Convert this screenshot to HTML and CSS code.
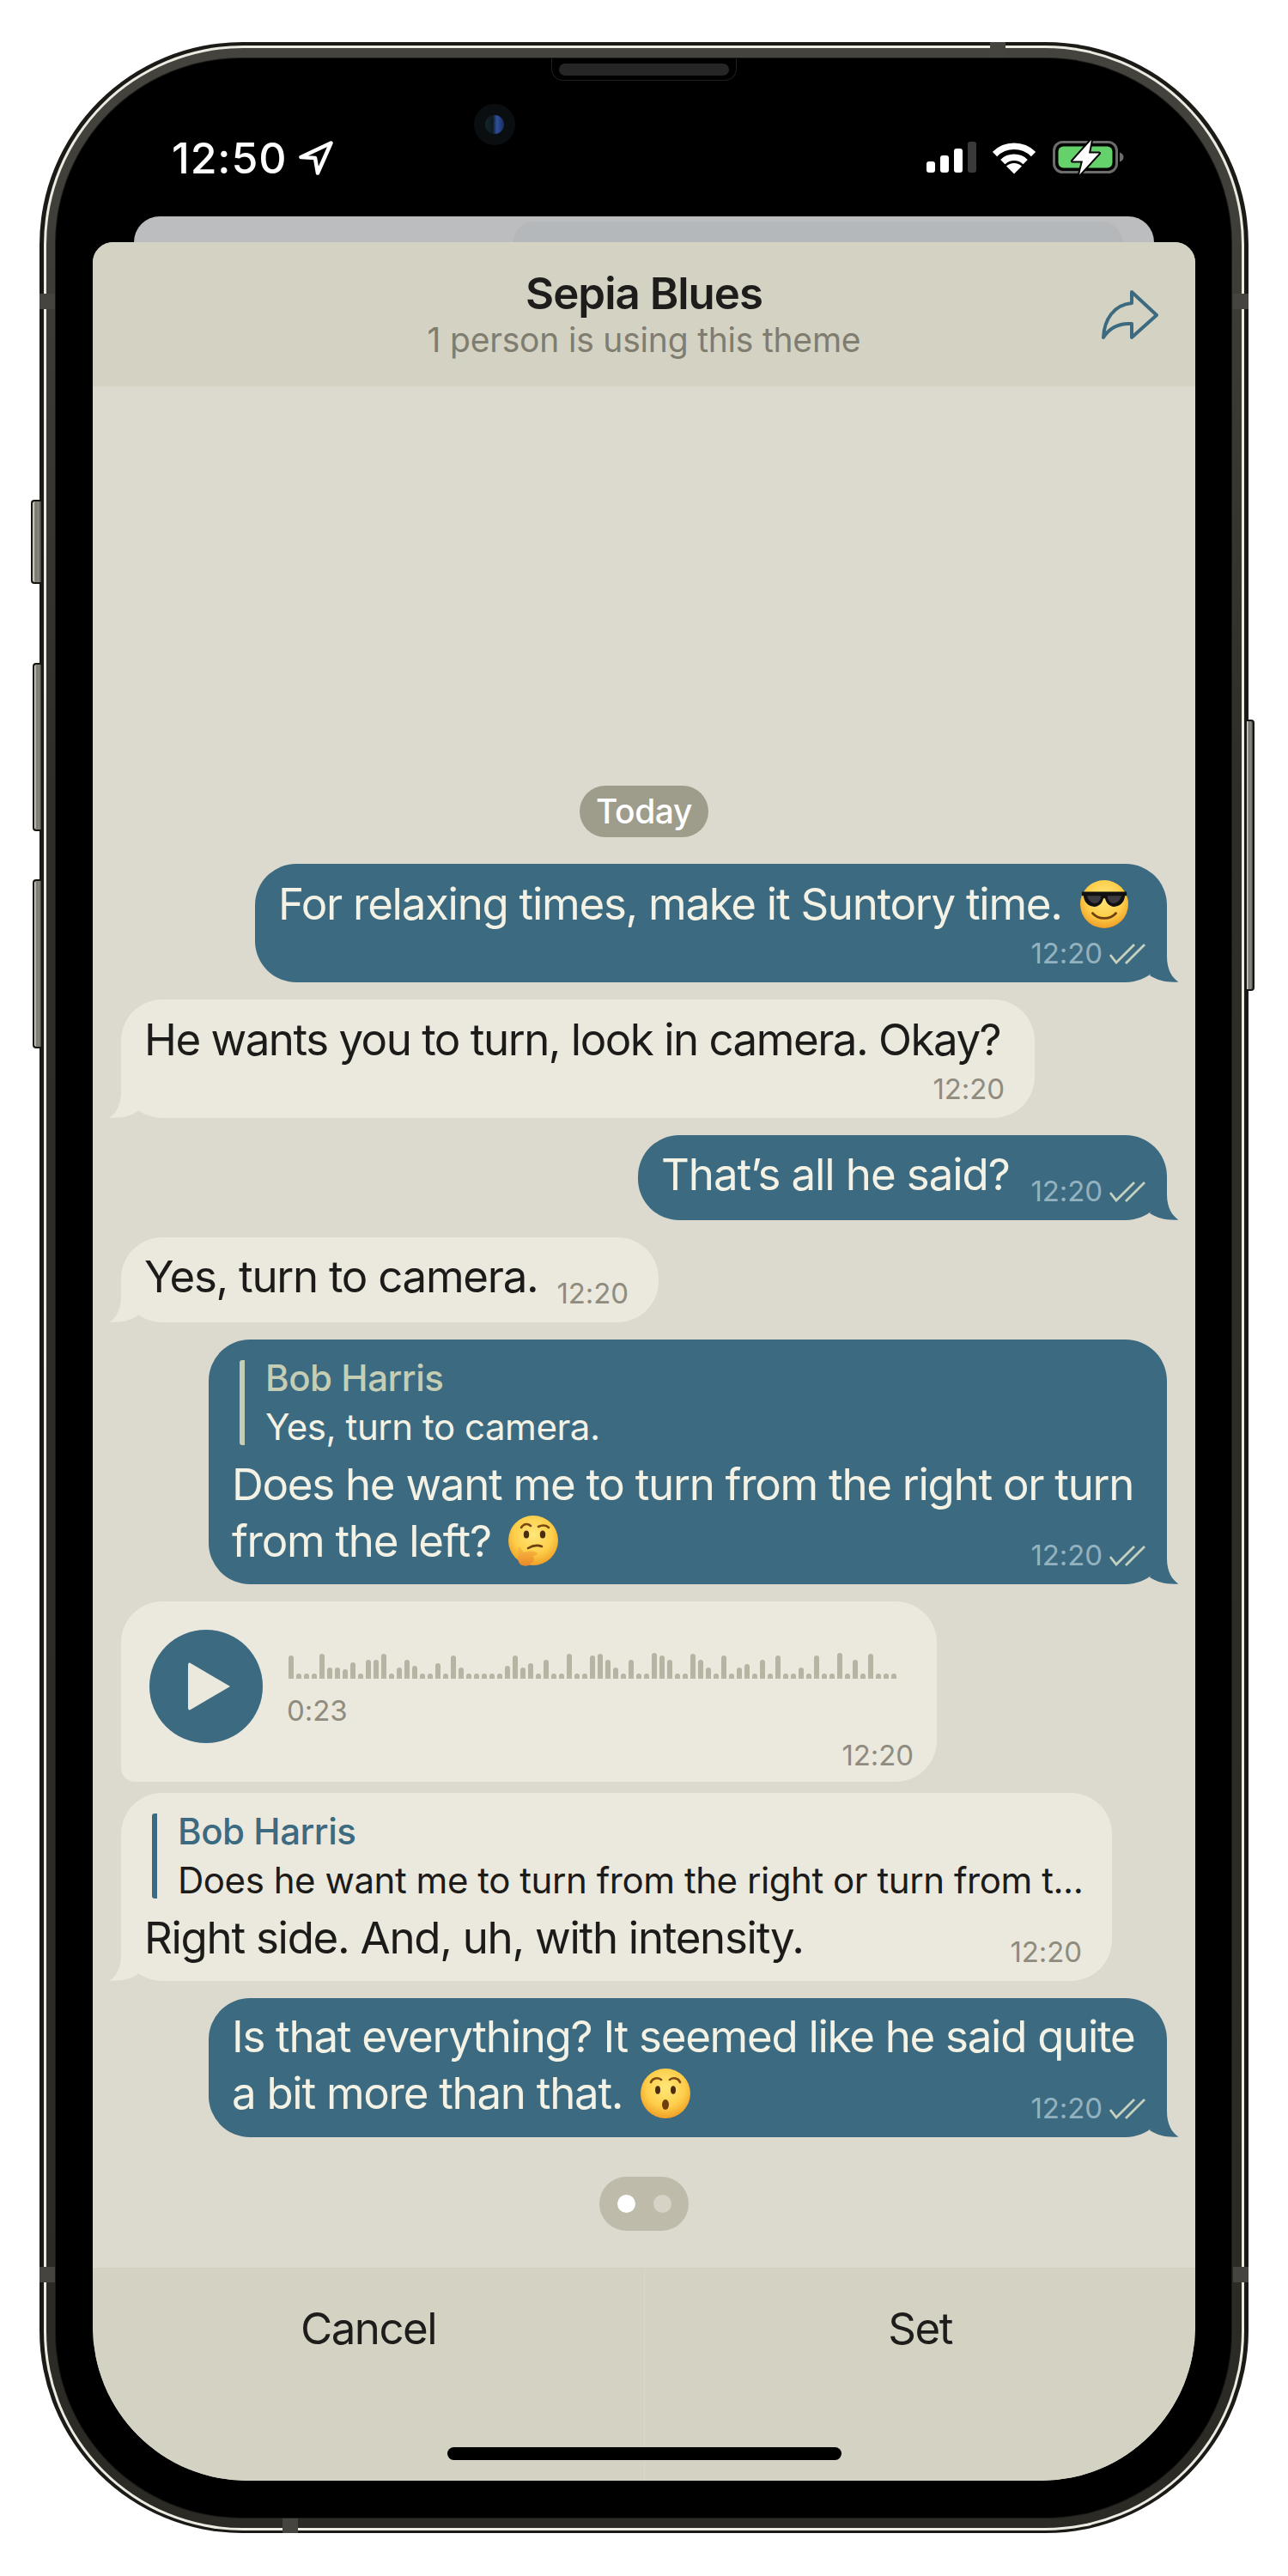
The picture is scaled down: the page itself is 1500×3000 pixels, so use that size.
FILE: index.html
```html
<!DOCTYPE html>
<html lang="en">
<head>
    <meta charset="UTF-8">
    <title>Sepia Blues</title>
    <link rel="stylesheet" href="styles.css">
</head>
<body>
    <svg class="defs" aria-hidden="true">
        <defs>
            <radialGradient id="face" cx="50%" cy="38%" r="65%">
                <stop offset="0" stop-color="#ffe77a"/>
                <stop offset="0.6" stop-color="#fdce4a"/>
                <stop offset="1" stop-color="#ee9a22"/>
            </radialGradient>
            <linearGradient id="hand" x1="0" y1="0" x2="0" y2="1">
                <stop offset="0" stop-color="#fbbf44"/>
                <stop offset="1" stop-color="#e8882a"/>
            </linearGradient>
        </defs>
        <symbol id="tail" viewBox="0 0 34 50">
            <path d="M20 0V20C20 35 26 45 33.5 49.5C21 50.5 9 48 0 42L10 20Z"/>
        </symbol>
        <symbol id="checks" viewBox="0 0 42 24">
            <path d="M1 13L8 22L29 1M19 23L41 1" fill="none" stroke-width="2.8"/>
        </symbol>
    </svg>

    <div class="phone">
        <span class="side-btn btn-mute"></span>
        <span class="side-btn btn-up"></span>
        <span class="side-btn btn-down"></span>
        <span class="side-btn btn-power"></span>
        <span class="antenna ant-top"></span>
        <span class="antenna ant-bottom"></span>
        <span class="antenna ant-left1"></span>
        <span class="antenna ant-left2"></span>
        <span class="antenna ant-right1"></span>
        <span class="antenna ant-right2"></span>

        <div class="rim">
            <div class="band">
                <div class="screen">
                    <div class="speaker"><span></span></div>
                    <div class="camera"><span></span></div>

                    <div class="status">
                        <div class="status-left">
                            <span class="clock">12:50</span>
                            <svg class="loc" viewBox="0 0 40 40"><path d="M37.5 2.5L2.5 19L19 20L22 37.5Z"/></svg>
                        </div>
                        <div class="status-right">
                            <div class="signal">
                                <span class="s1"></span><span class="s2"></span><span class="s3"></span><span class="s4"></span>
                            </div>
                            <svg class="wifi" viewBox="0 0 50 38">
                                <path d="M2.5 14.5A32 32 0 0 1 47.5 14.5M11.8 23.6A19 19 0 0 1 38.2 23.6" fill="none" stroke="#fff" stroke-width="7.5"/>
                                <path d="M25 37.5L16 28.5A13 13 0 0 1 34 28.5Z" fill="#fff"/>
                            </svg>
                            <svg class="battery" viewBox="0 0 84 42">
                                <rect x="1.5" y="3.5" width="73" height="35" rx="10" fill="none" stroke="#6c6c6c" stroke-width="3"/>
                                <rect x="6.5" y="8.5" width="63" height="25" rx="6" fill="#65d16a"/>
                                <path d="M78 15.5C81 16.5 82.5 18.5 82.5 21C82.5 23.5 81 25.5 78 26.5Z" fill="#6c6c6c"/>
                                <path d="M45 1L23 25.5H35L31 41.5L54 16.5H42Z" fill="#fff" stroke="#000" stroke-width="4" stroke-linejoin="round" paint-order="stroke"/>
                            </svg>
                        </div>
                    </div>

                    <div class="back-card"><div class="back-card-inner"></div></div>

                    <div class="sheet">
                        <header class="sheet-head">
                            <h1>Sepia Blues</h1>
                            <p>1 person is using this theme</p>
                            <svg class="share" viewBox="0 0 66 58">
                                <path d="M35 2L64 29L35 55V39C20 38 9 44 2 55C3 34 14 17 35 15Z"/>
                            </svg>
                        </header>

                        <div class="chat">
                            <div class="date-pill">Today</div>

                            <div class="bubble out msg-suntory">
                                <p class="text">For relaxing times, make it Suntory time.<svg class="emoji cool" viewBox="0 0 58 58">
                                    <circle cx="29" cy="29" r="29" fill="url(#face)"/>
                                    <path d="M2 14H56V19H54C53 28 47 32 41 32C35 32 31 27 30 22H28C27 27 23 32 17 32C11 32 5 28 4 19H2Z" fill="#111"/>
                                    <path d="M8 19C10 25 14 28 18 28C22 28 25 24 25 19Z" fill="#3b3b3f"/>
                                    <path d="M33 19C33 24 36 28 40 28C44 28 48 25 50 19Z" fill="#3b3b3f"/>
                                    <path d="M15 40C22 48 36 48 43 40" fill="none" stroke="#6d3f10" stroke-width="3" stroke-linecap="round"/>
                                </svg></p>
                                <span class="time">12:20<svg class="checks"><use href="#checks"/></svg></span>
                                <svg class="tail"><use href="#tail"/></svg>
                            </div>

                            <div class="bubble in msg-camera">
                                <p class="text">He wants you to turn, look in camera. Okay?</p>
                                <span class="time">12:20</span>
                                <svg class="tail"><use href="#tail"/></svg>
                            </div>

                            <div class="bubble out msg-said short">
                                <p class="text">That’s all he said?</p>
                                <span class="time">12:20<svg class="checks"><use href="#checks"/></svg></span>
                                <svg class="tail"><use href="#tail"/></svg>
                            </div>

                            <div class="bubble in msg-turn short">
                                <p class="text">Yes, turn to camera.</p>
                                <span class="time">12:20</span>
                                <svg class="tail"><use href="#tail"/></svg>
                            </div>

                            <div class="bubble out msg-right quoted">
                                <div class="quote">
                                    <div class="quote-name">Bob Harris</div>
                                    <div class="quote-text">Yes, turn to camera.</div>
                                </div>
                                <p class="text">Does he want me to turn from the right or turn<br>from the left?<svg class="emoji thinking" viewBox="0 0 58 60">
                                    <circle cx="29" cy="29" r="29" fill="url(#face)"/>
                                    <path d="M15 14C18 9 23 9 26 12M35 13C39 11 44 11 47 14" fill="none" stroke="#7a4a12" stroke-width="2.6" stroke-linecap="round"/>
                                    <ellipse cx="21" cy="22" rx="3.2" ry="4.6" fill="#4a2c0e"/>
                                    <ellipse cx="40" cy="22" rx="3.2" ry="4.6" fill="#4a2c0e"/>
                                    <path d="M23 38C28 35 34 34 39 36" fill="none" stroke="#6d3f10" stroke-width="2.6" stroke-linecap="round"/>
                                    <path d="M11 36C14 36 16 40 18 43C23 41 30 41 33 43C35 45 33 47 28 47C31 49 31 53 27 55C24 60 14 60 12 54C10 48 12 42 11 36Z" fill="url(#hand)"/>
                                </svg></p>
                                <span class="time">12:20<svg class="checks"><use href="#checks"/></svg></span>
                                <svg class="tail"><use href="#tail"/></svg>
                            </div>

                            <div class="bubble in voice">
                                <div class="play">
                                    <svg viewBox="0 0 50 56"><path d="M3 1L49 28L3 55C1 56 0 55 0 53V3C0 1 1 0 3 1Z"/></svg>
                                </div>
                                <div class="voice-body">
                                    <div class="wave">
                                        <i style="height:27px"></i><i></i><i></i><i></i><i style="height:29px"></i><i style="height:13px"></i><i style="height:13px"></i><i style="height:11px"></i><i style="height:19px"></i><i></i>
                                        <i style="height:22px"></i><i style="height:22px"></i><i style="height:29px"></i><i></i><i style="height:13px"></i><i style="height:22px"></i><i style="height:15px"></i><i></i><i></i><i style="height:18px"></i>
                                        <i></i><i style="height:27px"></i><i style="height:13px"></i><i></i><i></i><i></i><i></i><i></i><i style="height:15px"></i><i style="height:27px"></i>
                                        <i style="height:13px"></i><i style="height:18px"></i><i></i><i style="height:22px"></i><i></i><i></i><i style="height:29px"></i><i></i><i></i><i style="height:27px"></i>
                                        <i style="height:29px"></i><i style="height:22px"></i><i style="height:13px"></i><i></i><i style="height:22px"></i><i></i><i></i><i style="height:30px"></i><i style="height:27px"></i><i style="height:22px"></i>
                                        <i></i><i></i><i style="height:29px"></i><i style="height:22px"></i><i style="height:13px"></i><i></i><i style="height:27px"></i><i></i><i style="height:13px"></i><i style="height:17px"></i>
                                        <i></i><i style="height:22px"></i><i></i><i style="height:27px"></i><i></i><i></i><i style="height:13px"></i><i></i><i style="height:27px"></i><i></i>
                                        <i></i><i style="height:30px"></i><i></i><i style="height:22px"></i><i></i><i style="height:29px"></i><i></i><i></i><i></i>
                                    </div>
                                    <div class="duration">0:23</div>
                                </div>
                                <span class="time">12:20</span>
                            </div>

                            <div class="bubble in msg-side quoted">
                                <div class="quote">
                                    <div class="quote-name">Bob Harris</div>
                                    <div class="quote-text">Does he want me to turn from the right or turn from t...</div>
                                </div>
                                <p class="text">Right side. And, uh, with intensity.</p>
                                <span class="time">12:20</span>
                                <svg class="tail"><use href="#tail"/></svg>
                            </div>

                            <div class="bubble out msg-everything">
                                <p class="text">Is that everything? It seemed like he said quite<br>a bit more than that.<svg class="emoji hushed" viewBox="0 0 58 58">
                                    <circle cx="29" cy="29" r="29" fill="url(#face)"/>
                                    <path d="M12 16C14 11 20 10 24 13M34 13C38 10 44 11 46 16" fill="none" stroke="#7a4a12" stroke-width="2.6" stroke-linecap="round"/>
                                    <ellipse cx="20" cy="25" rx="3" ry="4.8" fill="#4a2c0e"/>
                                    <ellipse cx="38" cy="25" rx="3" ry="4.8" fill="#4a2c0e"/>
                                    <ellipse cx="29" cy="42" rx="4" ry="6" fill="#6d3f10"/>
                                </svg></p>
                                <span class="time">12:20<svg class="checks"><use href="#checks"/></svg></span>
                                <svg class="tail"><use href="#tail"/></svg>
                            </div>

                            <div class="pager"><span class="on"></span><span></span></div>
                        </div>

                        <div class="actions">
                            <div class="action">Cancel</div>
                            <div class="action">Set</div>
                        </div>
                        <div class="home-bar"></div>
                    </div>
                </div>
            </div>
        </div>
    </div>
</body>
</html>
```

FILE: styles.css
```css
* {
    box-sizing: border-box;
}
body {
    margin: 0;
    background: #fff;
    font-family: Inter, "Liberation Sans", sans-serif;
    overflow: hidden;
}
.defs {
    position: absolute;
    width: 0;
    height: 0;
}

/* frame */
.phone {
    position: relative;
    width: 1408px;
    height: 2901px;
    margin: 49px 0 0 46px;
    padding: 4px 5px 3px;
    background: #1b1a16;
    border-radius: 236px;
}
.rim {
    height: 100%;
    padding: 3px;
    background: #ecebe1;
    border-radius: 232px;
}
.band {
    height: 100%;
    padding: 12px 12px 12px 11px;
    background: linear-gradient(#44433d, #2e2d28 30%, #2b2a25);
    border-radius: 229px;
}
.screen {
    position: relative;
    display: flex;
    flex-direction: column;
    height: 100%;
    padding: 0 42px 43px 43px;
    background: #000;
    border-radius: 216px;
    box-shadow: 0 0 0 1px #1a1a18;
}
.antenna {
    position: absolute;
    background: #45443f;
}
.ant-top { left: 1107px; top: 0; width: 18px; height: 19px; }
.ant-bottom { left: 283px; bottom: 0; width: 18px; height: 18px; }
.ant-left1 { left: 0; top: 293px; width: 18px; height: 18px; }
.ant-left2 { left: 0; top: 2591px; width: 18px; height: 18px; }
.ant-right1 { right: 0; top: 293px; width: 18px; height: 18px; }
.ant-right2 { right: 0; top: 2591px; width: 18px; height: 18px; }

.side-btn {
    position: absolute;
    width: 12px;
    background: linear-gradient(90deg, #e4e2d8, #77766f 35%, #8b8a82 70%, #3c3b36);
    border: 2px solid #16150f;
    border-right: 0;
    border-radius: 4px 0 0 4px;
}
.btn-mute { left: -10px; top: 533px; height: 98px; }
.btn-up { left: -8px; top: 723px; width: 10px; height: 196px; }
.btn-down { left: -8px; top: 975px; width: 10px; height: 197px; }
.btn-power {
    left: auto;
    right: -7px;
    top: 789px;
    width: 9px;
    height: 316px;
    border: 2px solid #16150f;
    border-left: 0;
    border-radius: 0 4px 4px 0;
}

.speaker {
    position: absolute;
    left: 577px;
    top: 0;
    width: 216px;
    height: 26px;
    padding: 6px 8px;
    background: #000;
    border: 1px solid #1e1e1c;
    border-top: 0;
    border-radius: 0 0 14px 14px;
}
.speaker span {
    display: block;
    height: 14px;
    background: #262626;
    border-radius: 7px;
}
.camera {
    position: absolute;
    left: 487px;
    top: 53px;
    display: flex;
    align-items: center;
    justify-content: center;
    width: 48px;
    height: 48px;
    background: #0b0e10;
    border-radius: 50%;
}
.camera span {
    width: 22px;
    height: 22px;
    background: linear-gradient(90deg, #12282a, #0d1a1e 40%, #2d4f9c 62%, #1a2b5c);
    border-radius: 50%;
}

/* status bar */
.status {
    display: flex;
    justify-content: space-between;
    flex: none;
    height: 184px;
    padding: 96px 82px 0 92px;
    color: #fff;
}
.status-left {
    display: flex;
    align-items: flex-start;
    gap: 14px;
}
.clock {
    margin-top: -5px;
    font-size: 50px;
    font-weight: 500;
    line-height: 50px;
    letter-spacing: 0.9px;
}
.loc {
    width: 40px;
    height: 40px;
    fill: none;
    stroke: #fff;
    stroke-width: 4.5;
    stroke-linejoin: round;
}
.status-right {
    display: flex;
    align-items: flex-start;
}
.signal {
    display: flex;
    align-items: flex-end;
    gap: 6px;
    height: 36px;
    margin-top: 1px;
}
.signal span {
    width: 10px;
    background: #fff;
    border-radius: 3px;
}
.signal .s1 { height: 13px; }
.signal .s2 { height: 20px; }
.signal .s3 { height: 28px; }
.signal .s4 { height: 36px; background: #3a3a3a; }
.wifi {
    width: 50px;
    height: 38px;
    margin: 1px 0 0 19px;
}
.battery {
    width: 84px;
    height: 42px;
    margin: -2px 0 0 20px;
}

/* sheet behind */
.back-card {
    flex: none;
    height: 30px;
    margin: 0 48px;
    padding: 6px 37px 0 442px;
    background: #bcbdbe;
    border-radius: 30px 30px 0 0;
}
.back-card-inner {
    height: 24px;
    background: #b4b8bb;
    border-radius: 40px 40px 0 0;
}

/* sheet */
.sheet {
    position: relative;
    display: flex;
    flex-direction: column;
    flex: 1;
    overflow: hidden;
    background: #dcdace;
    border-radius: 24px 24px 180px 180px;
}
.sheet-head {
    position: relative;
    flex: none;
    height: 168px;
    padding-top: 30px;
    background: #d4d2c2;
    text-align: center;
}
.sheet-head h1 {
    margin: 0;
    color: #1e1d1b;
    font-size: 51px;
    font-weight: 600;
    line-height: 60px;
    letter-spacing: -1px;
}
.sheet-head p {
    margin: 2px 0 0;
    color: #7f7d70;
    font-size: 39px;
    line-height: 44px;
    letter-spacing: -0.2px;
}
.share {
    position: absolute;
    right: 43px;
    top: 56px;
    width: 66px;
    height: 58px;
    fill: none;
    stroke: #3c6a81;
    stroke-width: 4;
    stroke-linejoin: round;
}

/* chat */
.chat {
    display: flex;
    flex-direction: column;
    justify-content: flex-end;
    flex: 1;
    gap: 20px;
    padding: 0 33px 43px;
}
.date-pill {
    align-self: center;
    width: 150px;
    height: 60px;
    margin-bottom: 11px;
    background: #9e9c8b;
    border-radius: 30px;
    color: #fff;
    font-size: 39px;
    font-weight: 500;
    line-height: 60px;
    letter-spacing: -0.4px;
    text-align: center;
}
.bubble {
    position: relative;
    flex: none;
    padding: 14px 0 58px 27px;
    border-radius: 48px;
    white-space: nowrap;
}
.bubble.short {
    padding-top: 13px;
    padding-bottom: 20px;
}
.bubble.out {
    align-self: flex-end;
    background: #3c6a81;
    color: #f4f2e4;
}
.bubble.in {
    align-self: flex-start;
    background: #ebe9dd;
    color: #1c1b19;
}
.text {
    margin: 0;
    font-size: 51px;
    line-height: 66px;
    letter-spacing: -1.28px;
}
.msg-camera .text {
    letter-spacing: -1.5px;
}
.msg-said .text {
    letter-spacing: -1.08px;
}
.emoji {
    width: 58px;
    height: 58px;
    margin-left: 21px;
    vertical-align: -11px;
}
.cool {
    width: 56px;
    height: 56px;
    vertical-align: -10px;
}
.thinking {
    height: 60px;
    margin-left: 20px;
    vertical-align: -12px;
}
.time {
    position: absolute;
    right: 35px;
    bottom: 17px;
    display: flex;
    align-items: center;
    gap: 8px;
    font-size: 33px;
    line-height: 33px;
    letter-spacing: -0.1px;
}
.in .time {
    color: #8f8c7f;
}
.out .time {
    right: 25px;
    color: #93b2bf;
}
.checks {
    width: 42px;
    height: 24px;
    stroke: #c6d2bd;
}
.tail {
    position: absolute;
    bottom: 0;
    width: 34px;
    height: 50px;
}
.out .tail {
    right: -14px;
    fill: #3c6a81;
}
.in .tail {
    left: -14px;
    fill: #ebe9dd;
    transform: scaleX(-1);
}

/* widths of the bubbles */
.msg-suntory { width: 1062px; }
.msg-camera { width: 1064px; }
.msg-said { width: 616px; }
.msg-turn { width: 626px; }
.msg-right { width: 1116px; }
.msg-side { width: 1154px; }
.msg-everything { width: 1116px; padding-top: 12px; padding-bottom: 18px; }

.quoted {
    padding-top: 24px;
    padding-bottom: 17px;
}
.quote {
    display: flow-root;
    height: 99px;
    margin: 0 0 13px 9px;
    padding-left: 24px;
    border-left: 6px solid #c5cdb4;
    border-radius: 3px;
    font-size: 42px;
    line-height: 50px;
    letter-spacing: -0.45px;
}
.in .quote {
    border-left-color: #3c6a81;
}
.quote-name {
    margin-top: -4px;
    color: #c5cdb4;
    font-weight: 500;
}
.in .quote-name {
    color: #3c6a81;
}
.quote-text {
    margin-top: 7px;
}

/* voice message */
.voice {
    display: flex;
    gap: 30px;
    width: 950px;
    height: 210px;
    margin-bottom: -7px;
    padding: 33px 0 0 33px;
    border-radius: 48px 48px 48px 16px;
}
.play {
    display: flex;
    align-items: center;
    justify-content: center;
    flex: none;
    width: 132px;
    height: 132px;
    padding-left: 8px;
    background: #3c6a81;
    border-radius: 50%;
}
.play svg {
    width: 50px;
    height: 56px;
    fill: #ebe9dd;
}
.voice-body {
    padding-top: 27px;
}
.wave {
    display: flex;
    align-items: flex-end;
    gap: 3px;
    height: 30px;
}
.wave i {
    width: 6px;
    height: 6px;
    background: #b8b4a4;
    border-radius: 3px 3px 0 0;
}
.duration {
    margin: 21px 0 0 -2px;
    color: #8f8c7f;
    font-size: 33px;
    line-height: 33px;
    letter-spacing: -0.1px;
}
.voice .time {
    right: 27px;
    bottom: 14px;
}

/* pager */
.pager {
    display: flex;
    align-items: center;
    align-self: center;
    justify-content: center;
    gap: 21px;
    width: 104px;
    height: 63px;
    margin-top: 26px;
    background: #bebbaa;
    border-radius: 32px;
}
.pager span {
    width: 21px;
    height: 21px;
    background: #d6d3c6;
    border-radius: 50%;
}
.pager .on {
    background: #fff;
}

/* bottom buttons */
.actions {
    display: grid;
    grid-template-columns: 1fr 1fr;
    flex: none;
    height: 248px;
    background: #d4d2c2;
    border-top: 1px solid #d2d0c0;
}
.action {
    padding-top: 37px;
    color: #1e1d1b;
    font-size: 51px;
    line-height: 66px;
    letter-spacing: -1.5px;
    text-align: center;
}
.action + .action {
    border-left: 1px solid #dad8c9;
}
.home-bar {
    position: absolute;
    left: 413px;
    bottom: 24px;
    width: 459px;
    height: 15px;
    background: #000;
    border-radius: 8px;
}
```
